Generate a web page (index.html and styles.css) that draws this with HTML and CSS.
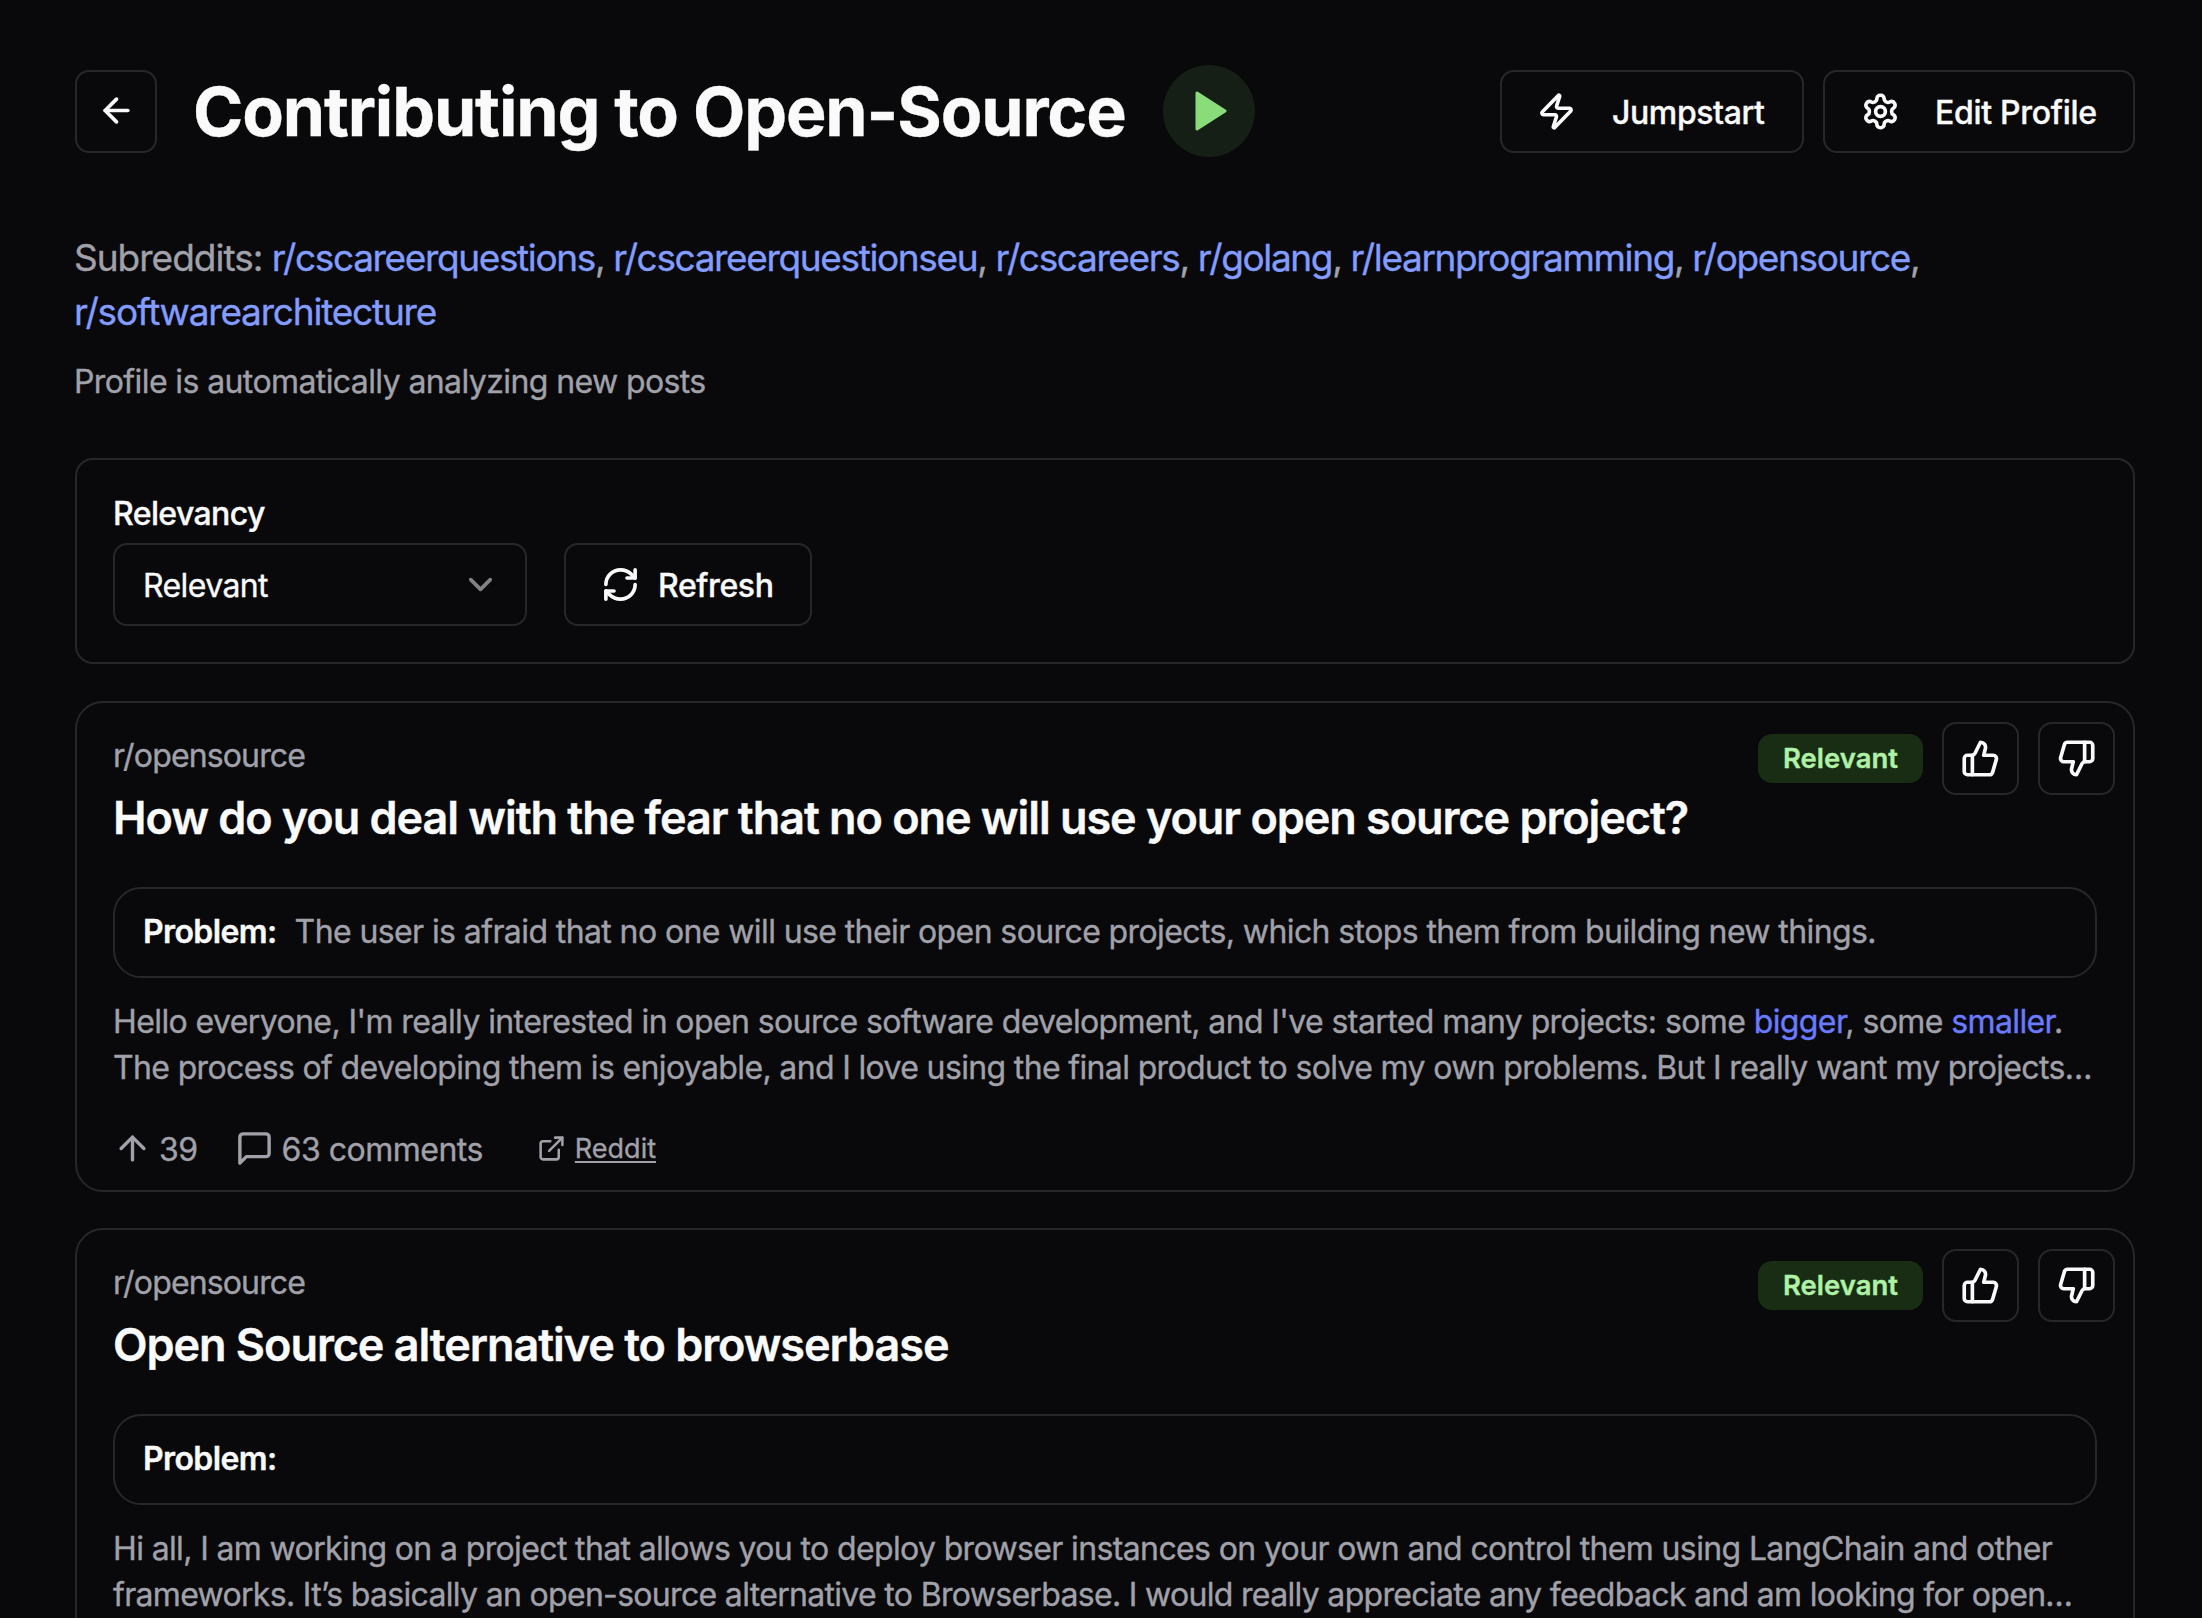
FILE: index.html
```html
<!DOCTYPE html>
<html lang="en">
<head>
<meta charset="utf-8">
<title>Contributing to Open-Source</title>
<link rel="stylesheet" href="styles.css">
</head>
<body>
<svg class="sprite" xmlns="http://www.w3.org/2000/svg">
  <symbol id="i-back" viewBox="0 0 24 24"><path d="m12 19-7-7 7-7"/><path d="M19 12H5"/></symbol>
  <symbol id="i-zap" viewBox="0 0 24 24"><path d="M4 14a1 1 0 0 1-.78-1.63l9.9-10.2a.5.5 0 0 1 .86.46l-1.92 6.02A1 1 0 0 0 13 10h7a1 1 0 0 1 .78 1.63l-9.9 10.2a.5.5 0 0 1-.86-.46l1.92-6.02A1 1 0 0 0 11 14z"/></symbol>
  <symbol id="i-gear" viewBox="0 0 24 24"><path d="M12.22 2h-.44a2 2 0 0 0-2 2v.18a2 2 0 0 1-1 1.73l-.43.25a2 2 0 0 1-2 0l-.15-.08a2 2 0 0 0-2.73.73l-.22.38a2 2 0 0 0 .73 2.73l.15.1a2 2 0 0 1 1 1.72v.51a2 2 0 0 1-1 1.74l-.15.09a2 2 0 0 0-.73 2.73l.22.38a2 2 0 0 0 2.73.73l.15-.08a2 2 0 0 1 2 0l.43.25a2 2 0 0 1 1 1.73V20a2 2 0 0 0 2 2h.44a2 2 0 0 0 2-2v-.18a2 2 0 0 1 1-1.73l.43-.25a2 2 0 0 1 2 0l.15.08a2 2 0 0 0 2.73-.73l.22-.39a2 2 0 0 0-.73-2.73l-.15-.08a2 2 0 0 1-1-1.74v-.5a2 2 0 0 1 1-1.74l.15-.09a2 2 0 0 0 .73-2.73l-.22-.38a2 2 0 0 0-2.73-.73l-.15.08a2 2 0 0 1-2 0l-.43-.25a2 2 0 0 1-1-1.73V4a2 2 0 0 0-2-2z"/><circle cx="12" cy="12" r="3"/></symbol>
  <symbol id="i-chevron" viewBox="0 0 24 24"><path d="m6 9 6 6 6-6"/></symbol>
  <symbol id="i-refresh" viewBox="0 0 24 24"><path d="M3 12a9 9 0 0 1 9-9 9.75 9.75 0 0 1 6.74 2.74L21 8"/><path d="M21 3v5h-5"/><path d="M21 12a9 9 0 0 1-9 9 9.75 9.75 0 0 1-6.74-2.74L3 16"/><path d="M8 16H3v5"/></symbol>
  <symbol id="i-up" viewBox="0 0 24 24"><path d="M7 10v12"/><path d="M15 5.88 14 10h5.83a2 2 0 0 1 1.92 2.56l-2.33 8A2 2 0 0 1 17.5 22H4a2 2 0 0 1-2-2v-8a2 2 0 0 1 2-2h2.76a2 2 0 0 0 1.79-1.11L12 2a3.13 3.13 0 0 1 3 3.88Z"/></symbol>
  <symbol id="i-down" viewBox="0 0 24 24"><path d="M17 14V2"/><path d="M9 18.12 10 14H4.17a2 2 0 0 1-1.92-2.56l2.33-8A2 2 0 0 1 6.5 2H20a2 2 0 0 1 2 2v8a2 2 0 0 1-2 2h-2.76a2 2 0 0 0-1.79 1.11L12 22a3.13 3.13 0 0 1-3-3.88Z"/></symbol>
  <symbol id="i-arrow-up" viewBox="0 0 24 24"><path d="m5 12 7-7 7 7"/><path d="M12 19V5"/></symbol>
  <symbol id="i-message" viewBox="0 0 24 24"><path d="M21 15a2 2 0 0 1-2 2H7l-4 4V5a2 2 0 0 1 2-2h14a2 2 0 0 1 2 2z"/></symbol>
  <symbol id="i-external" viewBox="0 0 24 24"><path d="M15 3h6v6"/><path d="M10 14 21 3"/><path d="M18 13v6a2 2 0 0 1-2 2H5a2 2 0 0 1-2-2V8a2 2 0 0 1 2-2h6"/></symbol>
</svg>
<main class="page">
  <header class="header">
    <button class="btn btn-back" aria-label="Back"><svg class="icon"><use href="#i-back"/></svg></button>
    <h1 class="title">Contributing to Open-Source</h1>
    <button class="play" aria-label="Running"><svg class="play-icon" viewBox="0 0 32 40"><path d="M2 2 30 20 2 38Z"/></svg></button>
    <div class="actions">
      <button class="btn btn-jump"><svg class="icon"><use href="#i-zap"/></svg><span>Jumpstart</span></button>
      <button class="btn btn-edit"><svg class="icon"><use href="#i-gear"/></svg><span>Edit Profile</span></button>
    </div>
  </header>

  <p class="subreddits"><span class="lead">Subreddits: </span><a>r/cscareerquestions</a>, <a>r/cscareerquestionseu</a>, <a>r/cscareers</a>, <a>r/golang</a>, <a>r/learnprogramming</a>, <a>r/opensource</a>,<br><a class="last">r/softwarearchitecture</a></p>
  <p class="status">Profile is automatically analyzing new posts</p>

  <section class="filter">
    <div class="field">
      <label class="label">Relevancy</label>
      <div class="select"><span>Relevant</span><svg class="icon chevron"><use href="#i-chevron"/></svg></div>
    </div>
    <button class="btn btn-refresh"><svg class="icon"><use href="#i-refresh"/></svg><span>Refresh</span></button>
  </section>

  <article class="card">
    <div class="votes">
      <span class="badge">Relevant</span>
      <button class="vote" aria-label="Relevant"><svg class="icon"><use href="#i-up"/></svg></button>
      <button class="vote" aria-label="Not relevant"><svg class="icon"><use href="#i-down"/></svg></button>
    </div>
    <div class="sub">r/opensource</div>
    <h2 class="post-title">How do you deal with the fear that no one will use your open source project?</h2>
    <div class="problem"><b>Problem:</b><span>The user is afraid that no one will use their open source projects, which stops them from building new things.</span></div>
    <p class="body"><span class="first">Hello everyone, I'm really interested in open source software development, and I've started many projects: some <a>bigger</a>, some <a>smaller</a>.</span><br>The process of developing them is enjoyable, and I love using the final product to solve my own problems. But I really want my projects…</p>
    <div class="meta">
      <span class="score"><svg class="icon"><use href="#i-arrow-up"/></svg><span>39</span></span>
      <span class="comments"><svg class="icon"><use href="#i-message"/></svg><span>63 comments</span></span>
      <a class="source"><svg class="icon small"><use href="#i-external"/></svg><span>Reddit</span></a>
    </div>
  </article>

  <article class="card">
    <div class="votes">
      <span class="badge">Relevant</span>
      <button class="vote" aria-label="Relevant"><svg class="icon"><use href="#i-up"/></svg></button>
      <button class="vote" aria-label="Not relevant"><svg class="icon"><use href="#i-down"/></svg></button>
    </div>
    <div class="sub">r/opensource</div>
    <h2 class="post-title">Open Source alternative to browserbase</h2>
    <div class="problem"><b>Problem:</b></div>
    <p class="body tight"><span class="first">Hi all, I am working on a project that allows you to deploy browser instances on your own and control them using LangChain and other</span><br>frameworks. It’s basically an open-source alternative to Browserbase. I would really appreciate any feedback and am looking for open…</p>
  </article>
</main>
</body>
</html>
```

FILE: styles.css
```css
* { box-sizing: border-box; margin: 0; padding: 0; }
html, body { height: 100%; overflow: hidden; }
body {
  background: #09090b;
  color: #fafafa;
  font-family: Inter, "Liberation Sans", sans-serif;
  font-size: 32px;
  letter-spacing: -0.6px;
  -webkit-text-stroke: 0.35px currentColor;
}
button { background: none; color: inherit; font: inherit; letter-spacing: inherit; border: 0; }
.sprite { display: none; }
.icon {
  width: 39px; height: 39px; flex: none;
  fill: none; stroke: currentColor; stroke-width: 2.25;
  stroke-linecap: round; stroke-linejoin: round;
}
.page { height: 100%; overflow: hidden; padding: 65px 67px 0 75px; }

.header { display: flex; align-items: center; height: 93px; }
.btn {
  display: flex; align-items: center;
  height: 83px; border: 2px solid #27272a; border-radius: 14px;
  font-weight: 500; letter-spacing: -0.4px; white-space: nowrap;
}
.btn span, .select span { padding-top: 2px; }
.btn .icon { margin-bottom: 1px; }
.btn-back { width: 82px; padding-bottom: 1px; justify-content: center; }
.title {
  margin-left: 36px;
  font-size: 68px; font-weight: 700; line-height: 80px;
  letter-spacing: -1.12px; white-space: nowrap;
  padding-bottom: 1px;
}
.play {
  display: flex; align-items: center; justify-content: center;
  width: 92px; height: 92px; margin: 0 0 1px 37px;
  border-radius: 50%; background: #161f15;
}
.play-icon { width: 32px; height: 40px; margin-left: 5px; fill: #8adc7b; stroke: #8adc7b; stroke-width: 3; stroke-linejoin: round; }
.actions { display: flex; gap: 19px; margin-left: auto; }
.btn-jump { width: 304px; padding-left: 35px; gap: 36px; }
.btn-edit { width: 312px; padding-left: 36px; gap: 35px; letter-spacing: -0.3px; }

.subreddits {
  margin-top: 73px; margin-left: -1px;
  font-size: 37px; line-height: 54px; letter-spacing: -1.36px;
  color: #a1a1aa; white-space: nowrap;
}
.subreddits .lead { letter-spacing: -1px; }
.subreddits .last { letter-spacing: -1.2px; }
.subreddits a { color: #839cff; }
.status { margin: 20px 0 0 -1px; line-height: 46px; color: #a1a1aa; }

.filter {
  display: flex; align-items: flex-end; gap: 37px;
  height: 206px; margin-top: 53px; padding: 0 36px 36px;
  border: 2px solid #27272a; border-radius: 18px;
}
.field { width: 414px; }
.label { display: block; margin-bottom: 12px; line-height: 34px; font-weight: 500; letter-spacing: -0.6px; }
.select {
  display: flex; align-items: center; justify-content: space-between;
  height: 83px; padding: 0 25px 0 28px;
  border: 2px solid #27272a; border-radius: 14px;
  letter-spacing: -0.6px;
}
.chevron { opacity: 0.5; }
.btn-refresh { width: 248px; padding-left: 35px; gap: 18px; }

.card {
  position: relative;
  height: 491px; margin-top: 37px; padding: 30px 36px 0;
  border: 2px solid #27272a; border-radius: 28px;
}
.card + .card { margin-top: 36px; }
.votes { position: absolute; top: 19px; right: 18px; display: flex; align-items: center; gap: 19px; }
.badge {
  width: 165px; height: 49px; border-radius: 14px;
  background: #192d15; color: #aff1a5;
  font-size: 27.5px; font-weight: 600; line-height: 48px; letter-spacing: 0; text-align: center;
}
.vote {
  display: flex; align-items: center; justify-content: center;
  width: 77px; height: 73px; border: 2px solid #27272a; border-radius: 14px;
}
.sub { line-height: 46px; color: #a1a1aa; letter-spacing: -0.85px; }
.post-title { margin-top: 11px; font-size: 45px; font-weight: 600; line-height: 56px; letter-spacing: -1.06px; white-space: nowrap; }
.problem {
  display: flex; align-items: center; gap: 18px;
  height: 91px; margin-top: 41px; padding: 0 27px 2px 28px;
  border: 2px solid #27272a; border-radius: 28px; white-space: nowrap;
}
.problem b { font-weight: 600; letter-spacing: -0.6px; }
.problem span { color: #a1a1aa; }
.body { margin-top: 21px; line-height: 46.2px; letter-spacing: -0.645px; color: #a1a1aa; white-space: nowrap; }
.body .first { letter-spacing: -0.6px; }
.body.tight { letter-spacing: -0.68px; }
.body.tight .first { letter-spacing: -0.63px; }
.body a { color: #6a7bff; }
.meta { display: flex; align-items: center; height: 39px; margin-top: 38px; color: #a1a1aa; letter-spacing: -0.5px; }
.meta .icon { stroke-width: 2.1; }
.score, .comments, .source { display: flex; align-items: center; }
.score span, .comments span { padding-top: 2px; }
.score { gap: 7px; }
.comments { gap: 8px; margin-left: 37px; }
.source { gap: 9px; margin-left: 54px; font-size: 27px; letter-spacing: 0; text-decoration: underline; text-decoration-thickness: 2px; text-underline-offset: 3px; }
.icon.small { width: 29px; height: 29px; }
```
